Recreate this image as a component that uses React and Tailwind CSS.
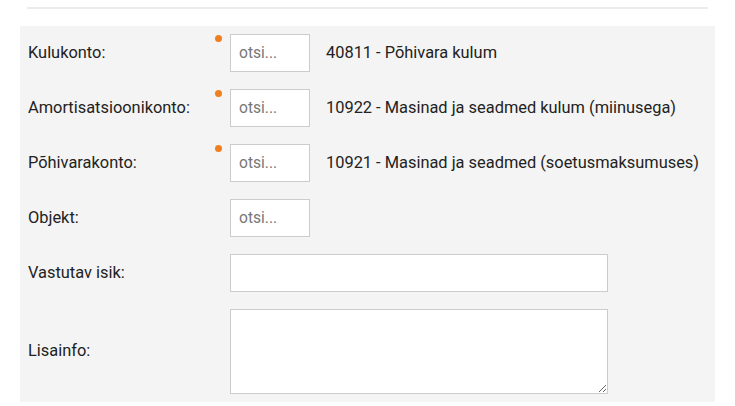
import React from 'react';

const Dot = () => (
  <span className="absolute -left-[15px] top-[1px] w-[7px] h-[7px] rounded-full bg-[#f07f1f]" />
);

const SearchField = ({ required, value }) => (
  <div className="flex items-center">
    <div className="relative">
      {required && <Dot />}
      <input
        type="text"
        placeholder="otsi..."
        className="w-[80px] h-[38px] bg-white border border-[#cccccc] px-[8px] text-[15.6px] text-[#222] placeholder:text-[#777] outline-none"
      />
    </div>
    {value && <span className="ml-[16px]">{value}</span>}
  </div>
);

const Row = ({ label, children }) => (
  <div className="flex items-center">
    <label className="w-[202px] shrink-0">{label}</label>
    {children}
  </div>
);

const App = () => {
  return (
    <div className="w-[735px] h-[406px] bg-white px-[20px] pt-[7px] font-['Roboto',sans-serif] text-[16.4px] text-[#222] overflow-hidden">
      <div className="mx-[7px] h-[2px] bg-[#ebebeb]" />
      <div className="mt-[17px] bg-[#f4f4f4] pl-[8px] py-[8px] flex flex-col gap-[17px]">
        <Row label="Kulukonto:">
          <SearchField required value="40811 - Põhivara kulum" />
        </Row>
        <Row label="Amortisatsioonikonto:">
          <SearchField required value="10922 - Masinad ja seadmed kulum (miinusega)" />
        </Row>
        <Row label="Põhivarakonto:">
          <SearchField required value="10921 - Masinad ja seadmed (soetusmaksumuses)" />
        </Row>
        <Row label="Objekt:">
          <SearchField />
        </Row>
        <Row label="Vastutav isik:">
          <input
            type="text"
            className="w-[378px] h-[38px] bg-white border border-[#cccccc] px-[8px] text-[15px] outline-none"
          />
        </Row>
        <Row label="Lisainfo:">
          <textarea className="w-[378px] h-[85px] bg-white border border-[#cccccc] px-[8px] py-[6px] text-[15px] outline-none block" />
        </Row>
      </div>
    </div>
  );
};

export default App;
